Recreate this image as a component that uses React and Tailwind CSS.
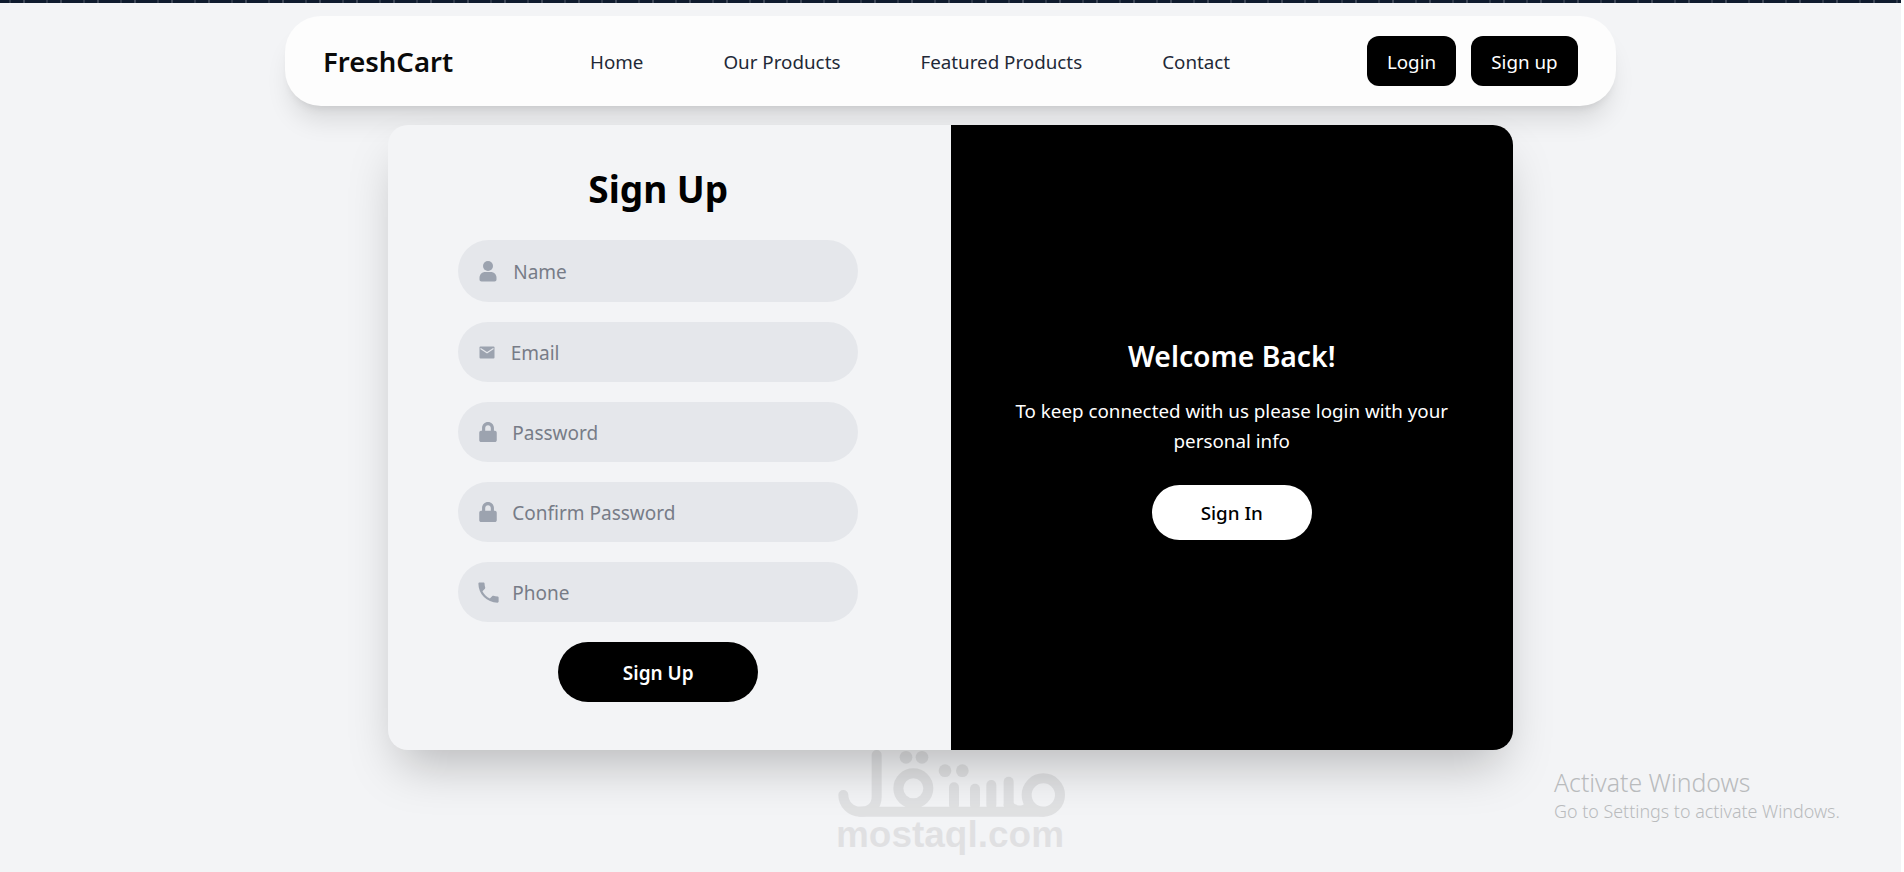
import React from "react";
import { FaLock } from "react-icons/fa";
import { MdPhone } from "react-icons/md";

const font = "font-['Noto_Sans','Open_Sans',sans-serif]";

function PersonIcon() {
  return (
    <svg width="18" height="21" viewBox="0 0 18 21" fill="#9ca3af" className="shrink-0">
      <circle cx="9" cy="5" r="5" />
      <path d="M0.5 17c0-4 3-6 5.5-6h6c2.500 0 5.500 2 5.500 6v1.500c0 1.200-.8 2-2 2h-13c-1.200 0-2-.8-2-2z" />
    </svg>
  );
}

function MailIcon() {
  return (
    <svg width="16" height="13" viewBox="0 0 16 13" className="shrink-0">
      <rect x="0.500" y="0.500" width="15" height="12" rx="1" fill="#9ca3af" />
      <path d="M1.500 2.500 8 6.800 14.500 2.500" fill="none" stroke="#e5e7eb" strokeWidth="1.200" />
    </svg>
  );
}

function Field({ icon, placeholder, type = "text", h = "h-[60px]", gap = "gap-[15px]" }) {
  return (
    <label className={`flex ${h} w-[400px] items-center ${gap} rounded-full bg-[#e5e7eb] pl-[21px] pr-6`}>
      <span className="flex w-[18px] justify-center">{icon}</span>
      <input
        type={type}
        placeholder={placeholder}
        className="w-full bg-transparent pt-[2px] text-[19px] text-[#374151] outline-none placeholder:text-[#777c87]"
      />
    </label>
  );
}

function Watermark() {
  return (
    <div className="pointer-events-none absolute left-[800px] top-[730px] flex h-[142px] w-[300px] flex-col items-center opacity-[0.075]">
      <svg width="300" height="84" viewBox="0 0 900 252" className="shrink-0 overflow-visible">
        <g fill="none" stroke="#000" strokeWidth="30" strokeLinecap="round" strokeLinejoin="round">
          <path d="M130 195a50 50 0 0 0 50 50c32 0 50-15 50-45V75" />
          <path d="M180 245H730" />
          <circle cx="340" cy="175" r="45" />
          <circle cx="730" cy="195" r="50" />
          <path d="M462 172V225" />
          <path d="M525 176V225" />
          <path d="M574 165V225" />
          <path d="M626 155V225" />
          <path d="M626 225C640 245 670 245 680 235" />
        </g>
        <g fill="#000">
          <circle cx="318" cy="82" r="19" />
          <circle cx="366" cy="82" r="19" />
          <circle cx="435" cy="122" r="19" />
          <circle cx="487" cy="122" r="19" />
        </g>
      </svg>
      <span className="font-['Liberation_Sans',Arial,sans-serif] text-[37px] leading-[42px] font-bold text-black">
        mostaql.com
      </span>
    </div>
  );
}

export default function App() {
  return (
    <div className={`${font} relative flex h-[872px] w-full overflow-hidden bg-white`}>
      <div className="flex h-full w-[1901px] shrink-0 flex-col items-center bg-[#f3f4f6]">
        <div className="h-[3px] w-full shrink-0 bg-[#0f1b2e] bg-[repeating-linear-gradient(90deg,#0f1b2e_0,#0f1b2e_9px,#4b5563_10px,#0f1b2e_11px,#0f1b2e_23px,#6b7280_24px,#0f1b2e_25px,#0f1b2e_37px)]" />

        <nav className="mt-[13px] flex h-[90px] w-[1331px] shrink-0 items-center justify-between rounded-[36px] bg-[#fdfdfd] pl-[38px] pr-[38px] shadow-xl">
          <a className="pt-[2px] text-[27.500px] leading-none font-semibold text-[#0a0a0a]">FreshCart</a>
          <ul className="flex items-center gap-[80px] pt-[2px] text-[18.800px] text-[#1f2937]">
            <li>Home</li>
            <li>Our Products</li>
            <li>Featured Products</li>
            <li>Contact</li>
          </ul>
          <div className="flex items-center gap-[15px]">
            <button className="h-[50px] w-[89px] rounded-xl bg-black pt-[2px] text-[18.800px] text-white">Login</button>
            <button className="h-[50px] w-[107px] rounded-xl bg-black pt-[2px] text-[18.800px] text-white">Sign up</button>
          </div>
        </nav>

        <main className="mt-[19px] grid h-[625px] w-[1125px] shrink-0 grid-cols-2 rounded-[20px] bg-[#f3f4f6] shadow-2xl">
          <section className="flex flex-col items-center pt-[39px] pr-[22px]">
            <h1 className="mb-[26px] text-[37px] leading-[50px] font-bold text-black">Sign Up</h1>
            <div className="flex flex-col items-center gap-[20px]">
              <Field h="h-[62px]" placeholder="Name" gap="gap-[16px]" icon={<PersonIcon />} />
              <Field placeholder="Email" type="email" icon={<MailIcon />} />
              <Field placeholder="Password" type="password" icon={<FaLock className="text-[20px] text-[#9ca3af]" />} />
              <Field placeholder="Confirm Password" type="password" icon={<FaLock className="text-[20px] text-[#9ca3af]" />} />
              <Field placeholder="Phone" type="tel" icon={<MdPhone className="shrink-0 text-[27px] text-[#9ca3af]" />} />
              <button className="h-[60px] w-[200px] rounded-full bg-black pt-[2px] text-[19px] font-semibold text-white">
                Sign Up
              </button>
            </div>
          </section>
          <section className="flex flex-col items-center justify-center rounded-r-[20px] bg-black px-[50px] text-center text-white">
            <h2 className="text-[28.300px] leading-[40px] font-semibold">Welcome Back!</h2>
            <p className="mt-[20px] text-[18.800px] leading-[30px]">
              To keep connected with us please login with your personal info
            </p>
            <button className="mt-[29px] h-[55px] w-[160px] rounded-full bg-white pt-[2px] text-[18.800px] font-medium text-black">
              Sign In
            </button>
          </section>
        </main>
      </div>

      <Watermark />

      <div className="pointer-events-none absolute left-[1554px] top-[766px] text-[#b9bbbd]">
        <div className="text-[24.800px] leading-[33px] font-light">Activate Windows</div>
        <div className="text-[17.900px] leading-[25px] font-light">Go to Settings to activate Windows.</div>
      </div>
    </div>
  );
}
